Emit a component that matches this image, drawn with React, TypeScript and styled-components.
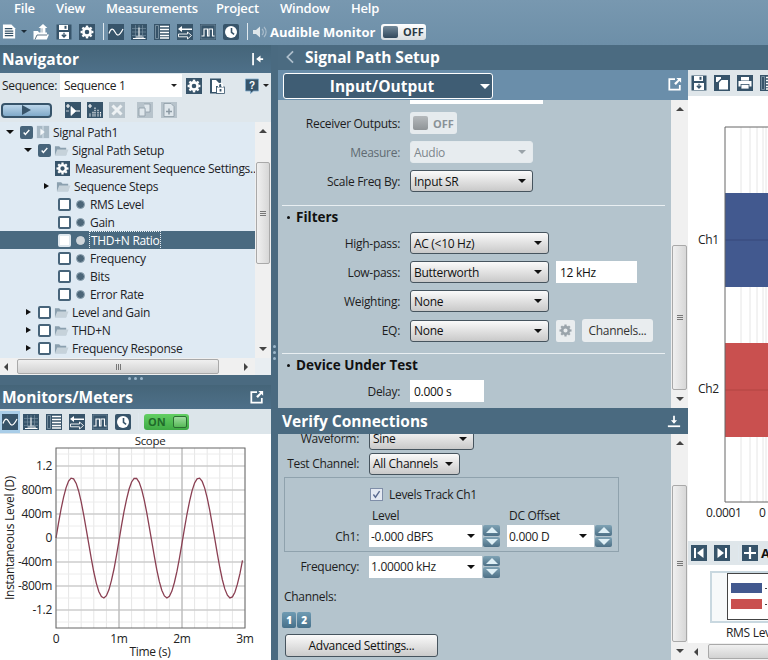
import React from "react";
import styled, { createGlobalStyle } from "styled-components";

const D = "#37546a";
const W = "#ffffff";

const Global = createGlobalStyle`
  html, body { margin: 0; padding: 0; width: 768px; height: 660px; overflow: hidden; background: #4a6a80; }
  * { box-sizing: border-box; }
  body { font-family: "Open Sans", "Noto Sans", "Liberation Sans", sans-serif; font-size: 12px; letter-spacing: -0.3px; color: #1d1d1d; }
`;

const Page = styled.div`width: 768px; height: 660px; display: flex; flex-direction: column; overflow: hidden; background: #4a6a80;`;
const TopBar = styled.header`height: 45px; flex: none; background: linear-gradient(#7898b0, #6d8fa8); color: #fff;`;
const MenuBar = styled.nav`height: 16px; display: flex; align-items: center; font-size: 13px; font-weight: 600; letter-spacing: -0.2px; padding-left: 14px; overflow: hidden;`;
const MenuItem = styled.span<{ $w: number }>`width: ${(p) => p.$w}px; flex: none; line-height: 16px; color: #fff;`;
const ToolBar = styled.div`height: 29px; display: flex; align-items: center; padding: 2px 0 0 2px;`;
const Tools = styled.div<{ $gap?: number; $ml?: number }>`display: flex; align-items: center; gap: ${(p) => p.$gap ?? 7}px; margin-left: ${(p) => p.$ml ?? 0}px;`;
const Sep = styled.i<{ $ml: number; $mr: number; $h?: number }>`display: block; width: 1px; height: ${(p) => p.$h ?? 17}px; background: #dfe8ee; margin: 0 ${(p) => p.$mr}px 0 ${(p) => p.$ml}px; flex: none;`;
const AudibleLabel = styled.span`font-size: 13px; font-weight: 700; letter-spacing: 0; margin-left: 2px; width: 111px; white-space: nowrap;`;

const Workspace = styled.div`flex: 1; display: flex; min-height: 0;`;
const LeftColumn = styled.aside`width: 271px; flex: none; display: flex; flex-direction: column; background: #4a6a80;`;
const VSplitter = styled.div`width: 7px; flex: none; display: flex; flex-direction: column; align-items: center; gap: 3px; padding-top: 300px;`;
const SplitDot = styled.i`display: block; width: 3px; height: 3px; border-radius: 50%; background: #9db8cb;`;
const HSplitter = styled.div`height: 10px; flex: none; display: flex; justify-content: center; align-items: center; gap: 3px; padding-bottom: 4px;`;
const PaneTitle = styled.div<{ $h: number }>`height: ${(p) => p.$h}px; flex: none; display: flex; align-items: center; justify-content: space-between; padding: 0 7px 0 2px; color: #fff; font-size: 15.5px; letter-spacing: 0; font-weight: 700; background: linear-gradient(#456579, #4e7089);`;

const SequenceRow = styled.div`height: 25px; flex: none; background: #dfe7ec; display: flex; align-items: center; padding-left: 2px;`;
const SeqLabel = styled.span`width: 58px; flex: none;`;
const SeqSelect = styled.div`width: 122px; height: 23px; flex: none; background: #fff; display: flex; align-items: center; justify-content: space-between; padding: 0 5px 0 4px; font-size: 12px;`;
const Caret = styled.i<{ $c?: string; $s?: number }>`display: block; flex: none; width: 0; height: 0; border-left: ${(p) => p.$s ?? 4}px solid transparent; border-right: ${(p) => p.$s ?? 4}px solid transparent; border-top: ${(p) => p.$s ?? 4}px solid ${(p) => p.$c ?? "#111"};`;
const ActionRow = styled.div`height: 24px; flex: none; background: #dfe7ec; display: flex; align-items: center; padding-left: 1px;`;
const RunButton = styled.div`width: 51px; height: 15px; flex: none; border: 2px solid #37546a; border-radius: 4px; background: linear-gradient(#bcd6ea, #7fa9c9); display: flex; align-items: center; justify-content: center;`;
const PlayMark = styled.i`display: block; width: 0; height: 0; border-top: 5px solid transparent; border-bottom: 5px solid transparent; border-left: 9px solid #37546a;`;

const TreeArea = styled.div`height: 236px; flex: none; display: flex; background: #dfeaf3;`;
const TreeList = styled.ul`flex: 1; margin: 0; padding: 1px 0 0; list-style: none; overflow: hidden; min-width: 0;`;
const TreeRow = styled.li<{ $indent: number; $selected?: boolean }>`height: 18px; display: flex; align-items: center; gap: 3px; padding-left: ${(p) => p.$indent}px; font-size: 12px; white-space: nowrap; background: ${(p) => (p.$selected ? "#4a6a80" : "transparent")}; color: ${(p) => (p.$selected ? "#fff" : "#1d2226")};`;
const TreeToggle = styled.i<{ $open?: boolean }>`display: flex; width: 8px; height: 8px; flex: none; margin-right: 3px; align-items: center; justify-content: center;
  &::after { content: ""; border-style: solid; ${(p) => p.$open ? "border-width: 4px 4px 0 4px; border-color: #111 transparent transparent transparent;" : "border-width: 3px 0 3px 5px; border-color: transparent transparent transparent #111;"} }`;
const Check = styled.i<{ $on?: boolean; $plain?: boolean }>`display: flex; align-items: center; justify-content: center; width: 13px; height: 13px; flex: none; border: 2px solid ${(p) => (p.$plain ? "#dfe8ee" : "#47647a")}; border-radius: 2px; background: ${(p) => (p.$on ? "#47647a" : "#fff")};`;
const Dot = styled.i<{ $light?: boolean }>`display: block; width: 9px; height: 9px; flex: none; border-radius: 50%; margin: 0 2px 0 2px; background: ${(p) => (p.$light ? "#cfd6db" : "#4c6678")}; border: 1px solid ${(p) => (p.$light ? "#cfd6db" : "#8ea3b1")};`;
const FocusText = styled.span`outline: 1px dotted #e6edf2; outline-offset: 0; padding: 0 1px;`;
const GearGap = styled.span`margin-left: 2px;`;

const VScroll = styled.div<{ $w: number }>`width: ${(p) => p.$w}px; flex: none; display: flex; flex-direction: column; align-items: center; background: #f0f0f0; overflow: hidden;`;
const ScrollUp = styled.i`display: block; flex: none; margin-top: 7px; width: 0; height: 0; border-left: 4px solid transparent; border-right: 4px solid transparent; border-bottom: 4px solid #444;`;
const ScrollDown = styled.i`display: block; flex: none; margin-top: auto; margin-bottom: 7px; width: 0; height: 0; border-left: 4px solid transparent; border-right: 4px solid transparent; border-top: 4px solid #444;`;
const VThumb = styled.div<{ $top: number; $h: number }>`width: calc(100% - 2px); height: ${(p) => p.$h}px; margin-top: ${(p) => p.$top}px; flex: none; background: linear-gradient(90deg, #f0f0f0, #d7d7d7); border: 1px solid #a9a9a9; border-radius: 2px; display: flex; align-items: center; justify-content: center;`;
const GripV = styled.i`display: block; width: 6px; height: 5px; border-top: 1px solid #777; border-bottom: 1px solid #777; background: linear-gradient(#777, #777) center / 100% 1px no-repeat;`;
const HScrollRow = styled.div`height: 17px; flex: none; display: flex; align-items: center; background: #f0f0f0;`;
const HThumb = styled.div<{ $ml: number; $w: number }>`height: 15px; width: ${(p) => p.$w}px; margin-left: ${(p) => p.$ml}px; flex: none; background: linear-gradient(#f0f0f0, #d2d2d2); border: 1px solid #a9a9a9; border-radius: 2px; display: flex; align-items: center; justify-content: center;`;
const GripH = styled.i`display: block; width: 5px; height: 6px; border-left: 1px solid #777; border-right: 1px solid #777; background: linear-gradient(#777, #777) center / 1px 100% no-repeat;`;
const ArrowL = styled.i<{ $ml: number }>`display: block; flex: none; margin-left: ${(p) => p.$ml}px; width: 0; height: 0; border-top: 4px solid transparent; border-bottom: 4px solid transparent; border-right: 4px solid #444;`;
const ArrowR = styled.i<{ $ml: number }>`display: block; flex: none; margin-left: ${(p) => p.$ml}px; width: 0; height: 0; border-top: 4px solid transparent; border-bottom: 4px solid transparent; border-left: 4px solid #444;`;
const ScrollCorner = styled.div`width: 16px; height: 17px; margin-left: auto; background: #e9eef2; flex: none;`;

const MonitorBar = styled.div`height: 25px; flex: none; background: #dce5ea; display: flex; align-items: center; padding-left: 2px;`;
const SelectedTile = styled.span`display: flex; padding: 3px 2px; margin: 0 3px 0 -2px; background: #a9cde8; flex: none;`;
const ScopeCard = styled.div`flex: 1; background: #fff; min-height: 0; svg { display: block; }`;

const MainColumn = styled.main`flex: 1; min-width: 0; display: flex; flex-direction: column;`;
const MainTitle = styled.div`height: 25px; flex: none; display: flex; align-items: center; padding: 0 0 2px 5px; gap: 8px; color: #fff; font-size: 15.5px; letter-spacing: 0; font-weight: 700; background: #4b6b81;`;
const MainBody = styled.div`flex: 1; display: flex; min-height: 0;`;
const CenterColumn = styled.section`width: 410px; flex: none; display: flex; flex-direction: column;`;
const SelectorBand = styled.div`height: 30px; flex: none; background: #6a8eaa; display: flex; align-items: flex-start; justify-content: space-between; padding: 3px 6px 0 5px;`;
const PageSelect = styled.div`width: 210px; height: 26px; border: 1px solid #fff; border-radius: 3px; background: #3f5d74; color: #fff; font-size: 15.5px; letter-spacing: 0; font-weight: 700; display: flex; align-items: center; padding: 0 2px 0 0;`;
const PageSelectText = styled.span`flex: 1; text-align: center;`;
const PopIcon = styled.span`margin-top: 4px; display: flex;`;

const PanelWrap = styled.div<{ $h: number }>`height: ${(p) => p.$h}px; flex: none; display: flex; background: #b4c4cd; overflow: hidden;`;
const PanelBody = styled.div`flex: 1; min-width: 0; overflow: hidden;`;
const TopContent = styled.div`margin-top: -18px;`;
const FormRow = styled.div<{ $mb?: number }>`display: grid; grid-template-columns: 122px auto 1fr; column-gap: 10px; align-items: center; height: 22px; margin-bottom: ${(p) => p.$mb ?? 7}px;`;
const FieldLabel = styled.label<{ $dim?: boolean }>`text-align: right; font-size: 12px; color: ${(p) => (p.$dim ? "#5f6b72" : "#1d1d1d")}; white-space: nowrap;`;
const FieldGroup = styled.div`display: flex; align-items: center; gap: 7px;`;
const SelectBox = styled.div<{ $w: number; $disabled?: boolean }>`width: ${(p) => p.$w}px; height: 22px; flex: none; display: flex; align-items: center; justify-content: space-between; padding: 0 6px 0 3px; font-size: 12px; border-radius: 3px; border: 1px solid ${(p) => (p.$disabled ? "#e4eaed" : "#46545e")}; background: ${(p) => (p.$disabled ? "#e7ecef" : "linear-gradient(#fafafa, #c9c9c9)")}; color: ${(p) => (p.$disabled ? "#7d868c" : "#111")};`;
const TextField = styled.div<{ $w: number }>`width: ${(p) => p.$w}px; height: 22px; flex: none; background: #fff; display: flex; align-items: center; padding: 0 4px; font-size: 12px; color: #111;`;
const Divider = styled.hr<{ $mt: number }>`border: 0; height: 1px; background: #e9eff2; margin: ${(p) => p.$mt}px 6px 0 4px;`;
const SectionTitle = styled.h3<{ $mb: number }>`margin: 2px 0 ${(p) => p.$mb}px; height: 18px; padding-left: 9px; display: flex; align-items: center; gap: 6px; font-size: 13.5px; letter-spacing: 0; font-weight: 700; color: #111; &::before { content: ""; width: 3px; height: 3px; background: #111; border-radius: 50%; }`;
const Toggle = styled.div<{ $variant: "off" | "dim" | "on" }>`display: flex; align-items: center; flex: none; border-radius: 3px; font-weight: 700; font-size: 11px; letter-spacing: 0;
  width: ${(p) => (p.$variant === "dim" ? 47 : 45)}px; height: ${(p) => (p.$variant === "dim" ? 22 : 16)}px; padding: ${(p) => (p.$variant === "dim" ? "4px 3px" : "2px")};
  gap: 3px; flex-direction: ${(p) => (p.$variant === "on" ? "row-reverse" : "row")};
  color: ${(p) => (p.$variant === "on" ? "#1f6a2a" : p.$variant === "dim" ? "#8a9298" : "#2a3a46")};
  background: ${(p) => (p.$variant === "on" ? "linear-gradient(#63cf63, #3faa45)" : p.$variant === "dim" ? "#e6ebee" : "linear-gradient(#fff, #d8dde0)")};
  justify-content: ${(p) => (p.$variant === "on" ? "space-between" : "flex-start")};`;
const Knob = styled.i<{ $variant: "off" | "dim" | "on" }>`display: block; flex: none; height: 100%; border-radius: 2px; width: ${(p) => (p.$variant === "on" ? 14 : 15)}px; background: ${(p) => (p.$variant === "on" ? "linear-gradient(#9fdc9f, #57ba57)" : p.$variant === "dim" ? "linear-gradient(#b5b9bc, #8f9497)" : "linear-gradient(#73899a, #32495c)")}; ${(p) => (p.$variant === "on" ? "border: 1px solid #2b6f32;" : "")}`;
const ToggleText = styled.span`line-height: 1; padding-left: 2px;`;
const FlatButton = styled.div`height: 23px; width: 71px; display: flex; align-items: center; justify-content: center; border-radius: 3px; background: #e9edef; color: #333; font-size: 12px;`;
const IconTile = styled.span`display: flex; align-items: center; justify-content: center; width: 19px; height: 22px; background: #e9edef; border-radius: 2px; flex: none;`;

const SectionBar = styled.div`height: 26px; flex: none; display: flex; align-items: center; justify-content: space-between; padding: 0 7px 0 4px; color: #fff; font-size: 15.5px; letter-spacing: 0; font-weight: 700; background: #4a6a80;`;
const BottomContent = styled.div`margin-top: -7px;`;
const BottomRow = styled.div<{ $mb?: number; $mt?: number }>`display: grid; grid-template-columns: 81px auto 1fr; column-gap: 10px; align-items: center; height: 23px; margin-bottom: ${(p) => p.$mb ?? 0}px; margin-top: ${(p) => p.$mt ?? 0}px;`;
const GroupBox = styled.div`margin: 2px 0 0 6px; width: 335px; height: 75px; border: 1px solid #8fa2ad; padding-top: 8px;`;
const CheckRow = styled.div`margin-left: 85px; display: flex; align-items: center; gap: 6px; height: 16px; font-size: 12px;`;
const LightCheck = styled.i`display: flex; align-items: center; justify-content: center; width: 13px; height: 13px; background: #e4e9f2; border: 1px solid #7f8ea8;`;
const HeadRow = styled.div`margin: 5px 0 3px 87px; height: 15px; display: grid; grid-template-columns: 137px auto; font-size: 12px; align-items: center;`;
const GroupFieldRow = styled.div`display: grid; grid-template-columns: 74px auto; column-gap: 10px; align-items: center; height: 22px;`;
const Combo = styled.div<{ $w: number }>`width: ${(p) => p.$w}px; height: 22px; flex: none; background: #fff; display: flex; align-items: center; justify-content: space-between; padding: 0 7px 0 2px; font-size: 12px;`;
const ComboSet = styled.div`display: flex; align-items: center; gap: 1px;`;
const ComboGap = styled.div`width: 5px;`;
const Spin = styled.div`display: flex; flex-direction: column; gap: 1px; width: 17px; height: 22px; flex: none;`;
const SpinPart = styled.div<{ $down?: boolean }>`flex: 1; border-radius: 2px; background: linear-gradient(#7fa3b5, #4d7086); display: flex; align-items: center; justify-content: center;
  &::after { content: ""; border-left: 6px solid transparent; border-right: 6px solid transparent; ${(p) => p.$down ? "border-top: 6px solid #dff0f6;" : "border-bottom: 6px solid #dff0f6;"} }`;
const ChannelsLabel = styled.div`margin: 9px 0 0 6px; height: 18px; font-size: 12px; display: flex; align-items: center;`;
const ChannelChips = styled.div`display: flex; gap: 1px; margin: 7px 0 0 4px; height: 16px;`;
const Chip = styled.span`width: 14px; height: 16px; border-radius: 2px; background: linear-gradient(#6f9bb3, #46708a); color: #fff; font-size: 10px; font-weight: 800; display: flex; align-items: center; justify-content: center;`;
const AdvancedButton = styled.div`margin: 6px 0 0 7px; width: 153px; height: 23px; border: 1px solid #46545e; border-radius: 3px; background: linear-gradient(#fafafa, #cbcbcb); display: flex; align-items: center; justify-content: center; font-size: 12px; color: #111;`;

const ResultsColumn = styled.section`flex: 1; min-width: 0; display: flex; flex-direction: column; background: #fff; overflow: hidden;`;
const ResultsBar = styled.div<{ $h: number }>`height: ${(p) => p.$h}px; flex: none; background: #dfe6ea; display: flex; align-items: center; padding-left: 3px; overflow: hidden; white-space: nowrap;`;
const ChartHolder = styled.div`height: 445px; flex: none; svg { display: block; }`;
const ThumbStrip = styled.div`flex: 1; min-height: 0; padding: 6px 0 0 22px; overflow: hidden;`;
const ThumbFigure = styled.figure`margin: 0; width: 86px; text-align: center; font-size: 12px; color: #222;`;
const ThumbFrame = styled.div`height: 52px; width: 92px; border: 2px solid #c9d8e0; background: #f7f9fa; padding: 0 0 0 15px; margin-bottom: 1px; svg { display: block; }`;
const AddLabel = styled.span`font-size: 13px; font-weight: 700; letter-spacing: 0; margin-left: 3px; color: #111;`;

const Ico = styled.svg.attrs({ viewBox: "0 0 16 16", xmlns: "http://www.w3.org/2000/svg" })<{ $s?: number }>`
  width: ${(p) => p.$s ?? 16}px; height: ${(p) => p.$s ?? 16}px; flex: none; display: block;
`;

const gearTeeth = (c: string, cx = 8, cy = 8) =>
  [0, 45, 90, 135, 180, 225, 270, 315].map((a) => (
    <line key={a} x1={cx} y1={cy - 4.5} x2={cx} y2={cy - 6.4} stroke={c} strokeWidth="2.4" transform={`rotate(${a} ${cx} ${cy})`} />
  ));

type G = "scope" | "fft" | "list" | "swap" | "pulse" | "clock" | "gear" | "doc" | "open" | "save" | "lock" | "help" | "addStep" | "addBars" | "x" | "dup" | "addDoc" | "speaker" | "collapse" | "pop" | "dock" | "folder" | "path" | "copy" | "print" | "prev" | "next" | "plus" | "chk" | "chkLight" | "gearGrey" | "back";

const glyph: Record<G, React.ReactNode> = {
  scope: <><rect width="16" height="16" fill={D} /><path d="M1 9.5C3 4 5 4 7 8s4 5 8-3" stroke={W} strokeWidth="1.2" fill="none" /></>,
  fft: <><rect width="16" height="16" fill={D} /><path d="M4.5 1v13M8 1v13M11.5 1v13M1 4.5h14M1 8h14M1 11.5h14" stroke="#7d95a6" strokeWidth=".6" /><path d="M2 14.5h12.5M6 14.5V12M8 14.5V3.5M10 14.5v-3M12 14.5v-2" stroke={W} strokeWidth="1" /></>,
  list: <><rect width="16" height="16" fill={D} /><path d="M1.5 1.5h3v13h-3z" fill="none" stroke="#8ea3b1" strokeWidth=".7" /><path d="M6 2.5h9M6 5.5h9M6 8.5h9M6 11.5h9M6 14h9" stroke={W} strokeWidth="1.5" /></>,
  swap: <><rect width="16" height="16" fill={D} /><path d="M15 4.5H5V2L1 5l4 3V6h10z" fill={W} /><path d="M1.5 10h9V8l4 3.5-4 3.5v-2.2h-9z" fill={D} stroke={W} strokeWidth=".9" /></>,
  pulse: <><rect width="16" height="16" fill={D} /><rect x="1" y="1" width="14" height="14" fill="none" stroke="#7d95a6" strokeWidth=".6" /><path d="M1.5 12h2.5V5h3.5v7h1.5V5h3.5v7h2" fill="none" stroke={W} strokeWidth="1.1" /></>,
  clock: <><rect width="16" height="16" rx="2" fill={D} /><circle cx="8" cy="8" r="6" fill={W} /><path d="M8.5 4v4.3l2.6 2" stroke={D} strokeWidth="1.6" fill="none" /></>,
  gear: <><rect width="16" height="16" fill={D} /><circle cx="8" cy="8" r="3.6" fill="none" stroke={W} strokeWidth="2.6" />{gearTeeth(W)}</>,
  gearGrey: <><circle cx="8" cy="8" r="3.6" fill="none" stroke="#9aa4ab" strokeWidth="2.8" />{gearTeeth("#9aa4ab")}</>,
  doc: <><path d="M1 .5h9l4 4v11H1z" fill={W} /><path d="M3 5h8M3 7.5h9M3 10h9M3 12.5h9" stroke={D} strokeWidth="1.3" /></>,
  open: <><path d="M.5 15.5V7h4.5l1 1.5h1.6V4H5.6L10 0l4.4 4h-2V8.5h1.6v2h2l-2.2 5z" fill={W} /><path d="M2 15.5 4 11h10" fill="none" stroke={D} strokeWidth=".8" /><path d="M9 4.3V8.5" stroke={D} strokeWidth=".5" /></>,
  save: <><rect width="15" height="15" y=".5" x=".5" fill={D} /><rect x="3" y="1" width="9" height="5" fill={W} /><rect x="8.5" y="1.8" width="2" height="3" fill={D} /><rect x="3" y="8" width="10" height="7" fill={W} /><path d="M8 8.8v3.4M5.8 10.8 8 13l2.2-2.2" stroke={D} strokeWidth="1.3" fill="none" /></>,
  lock: <><rect x="1" y=".5" width="11" height="15" fill={D} /><path d="M3 2h4l3 3v3H7v6H3z" fill={W} /><rect x="7.5" y="9" width="8" height="6.5" fill={W} stroke={D} strokeWidth=".8" /><path d="M9.5 9V7.3a2 2 0 0 1 4 0V9" fill="none" stroke={W} strokeWidth="1.3" /><rect x="10.6" y="11" width="1.8" height="2.5" fill={D} /></>,
  help: <><path d="M1.5 1h13v12H9.5l-3 2.5V13h-5z" fill={D} stroke="#7fa9c9" strokeWidth=".8" /><text x="8" y="11" textAnchor="middle" fontSize="10" fontWeight="700" fill="#fff" fontFamily="Liberation Sans, sans-serif">?</text></>,
  addStep: <><rect width="16" height="16" fill={D} /><path d="M1 4h4M3 2v4" stroke={W} strokeWidth="1.2" /><path d="M1 9h3M6 4.5v9l5-4.5z" stroke={W} fill={W} strokeWidth=".7" /><path d="M11 9h4" stroke={W} strokeWidth="1" /></>,
  addBars: <><rect width="16" height="16" fill={D} /><path d="M1 4h4M3 2v4" stroke={W} strokeWidth="1.2" /><path d="M3 14.5v-3M6 14.5V9M8 14.5V5M11 14.5V7M13.5 14.5V10" stroke={W} strokeWidth="1.1" strokeDasharray="1.2 .6" /></>,
  x: <><rect width="16" height="16" fill="#b7c3cb" /><path d="M3.5 3.5l9 9M12.5 3.5l-9 9" stroke="#eef2f4" strokeWidth="3" /></>,
  dup: <><rect width="16" height="16" fill="#b7c3cb" /><path d="M2 6h6v8H2zM7 2h6v8H9" fill="#dfe7ec" stroke="#8c9aa4" strokeWidth=".8" /></>,
  addDoc: <><rect width="16" height="16" fill="#b7c3cb" /><path d="M3 1.5h7l3 3v10H3z" fill="#dfe7ec" stroke="#8c9aa4" strokeWidth=".8" /><path d="M8 6.5v6M5 9.5h6" stroke="#8c9aa4" strokeWidth="1.5" /></>,
  speaker: <><path d="M1 6h3l4-3.5v11L4 10H1z" fill="#dfe6ea" /><path d="M10 5a4 4 0 0 1 0 6M12 3a7 7 0 0 1 0 10" fill="none" stroke="#a9bccb" strokeWidth="1.2" /></>,
  collapse: <><path d="M3.5 1v14" stroke={W} strokeWidth="2" /><path d="M7 8l5-4v3h3v2h-3v3z" fill={W} /></>,
  pop: <><path d="M8 2.5H1.5v12h12V9" fill="none" stroke={W} strokeWidth="2" /><path d="M9.5 1h5.5v5.5l-2-2-4 4.5-2-2 4.5-4z" fill={W} /></>,
  dock: <><path d="M1 14h14" stroke={W} strokeWidth="2" /><path d="M8 11L4.5 7H7V2h2v5h2.5z" fill={W} /></>,
  folder: <><path d="M1 13V3.5h4.5L7 5h6v8z" fill="#8ba0af" /><path d="M1 13l2.4-6H15.5L13 13z" fill="#c6d2da" /></>,
  path: <><rect x="1" y="1" width="14" height="14" fill="#a8b9c5" /><path d="M8 1v14" stroke="#dfeaf3" strokeWidth="1" /><path d="M5 4v8l5-4z" fill="#f2f6f9" /></>,
  copy: <><rect width="16" height="16" fill={D} /><path d="M7.5 5h6.5v9.5H5V7.5z" fill={W} /><path d="M2 2h5v1.5L3.5 7H2z" fill={W} /></>,
  print: <><rect width="16" height="16" fill={D} /><rect x="4" y="2" width="8" height="3.5" fill={W} /><rect x="1.5" y="6" width="13" height="5.5" fill={W} /><rect x="4" y="9.5" width="8" height="4.5" fill={W} stroke={D} strokeWidth=".8" /></>,
  prev: <><rect width="16" height="16" fill={D} /><rect x="3" y="3" width="2" height="10" fill={W} /><path d="M12.5 3v10L6 8z" fill={W} /></>,
  next: <><rect width="16" height="16" fill={D} /><rect x="11" y="3" width="2" height="10" fill={W} /><path d="M3.5 3v10L10 8z" fill={W} /></>,
  plus: <><rect width="16" height="16" fill={D} /><path d="M8 2v12M2 8h12" stroke={W} strokeWidth="2.2" /></>,
  chk: <path d="M3 8l3 3.5L13 3.5" fill="none" stroke={W} strokeWidth="2.4" />,
  chkLight: <path d="M3.5 8l3 4L12.5 3" fill="none" stroke="#5a6a90" strokeWidth="2" />,
  back: <path d="M11.5 1.5L5 8l6.5 6.5" fill="none" stroke="#aebfcc" strokeWidth="2" />,
};

const Icon = ({ n, s }: { n: G; s?: number }) => <Ico $s={s}>{glyph[n]}</Ico>;

const SCOPE_W = 271;
const SCOPE_H = 226;
const PL = 56, PR = 245, PT = 14, PB = 194;
const msToX = (m: number) => PL + (m / 3) * (PR - PL);
const vToY = (v: number) => (PT + PB) / 2 - (v / 1.5) * ((PB - PT) / 2);

const wave = () => {
  const pts: string[] = [];
  for (let t = 0; t <= 3; t += 0.04) {
    pts.push(`${msToX(t).toFixed(1)},${vToY(Math.sin((2 * Math.PI * t) / 1.007)).toFixed(1)}`);
  }
  return pts.join(" ");
};

const ScopeChart = () => {
  const minorX = Array.from({ length: 16 }, (_, i) => i * 0.2);
  const minorY = Array.from({ length: 15 }, (_, i) => -1.4 + i * 0.2);
  const majorY: [number, string][] = [[1.2, "1.2"], [0.8, "800m"], [0.4, "400m"], [0, "0"], [-0.4, "-400m"], [-0.8, "-800m"], [-1.2, "-1.2"]];
  return (
    <svg width={SCOPE_W} height={SCOPE_H} fontFamily={'"Open Sans", sans-serif'} fontSize="12" fill="#222">
      {minorX.map((m) => <line key={m} x1={msToX(m)} x2={msToX(m)} y1={PT} y2={PB} stroke="#e6e6e6" />)}
      {minorY.map((v) => <line key={v} y1={vToY(v)} y2={vToY(v)} x1={PL} x2={PR} stroke="#ececec" />)}
      {[1, 2].map((m) => <line key={m} x1={msToX(m)} x2={msToX(m)} y1={PT} y2={PB} stroke="#aaa" />)}
      {majorY.map(([v]) => <line key={v} y1={vToY(v)} y2={vToY(v)} x1={PL} x2={PR} stroke="#bdbdbd" />)}
      <polyline points={wave()} fill="none" stroke="#8a3f52" strokeWidth="1.3" />
      <rect x={PL} y={PT} width={PR - PL} height={PB - PT} fill="none" stroke="#666" />
      <text x="150" y="11" textAnchor="middle" fontSize="11.5">Scope</text>
      {majorY.map(([v, l]) => <text key={l} x="52" y={vToY(v) + 4} textAnchor="end">{l}</text>)}
      {[0, 1, 2, 3].map((m) => <text key={m} x={msToX(m)} y="209" textAnchor="middle">{m === 0 ? "0" : `${m}m`}</text>)}
      <text x="150" y="222" textAnchor="middle">Time (s)</text>
      <text transform={`translate(14 104) rotate(-90)`} textAnchor="middle">Instantaneous Level (D)</text>
    </svg>
  );
};

const LevelChart = () => (
  <svg width="80" height="445" fontFamily={'"Open Sans", sans-serif'} fontSize="12" fill="#222">
    {[53, 62, 69, 75, 78].map((x) => <line key={x} x1={x} x2={x} y1="31" y2="406" stroke="#e6e6e6" />)}
    <rect x="37" y="97" width="43" height="94" fill="#42598f" />
    <line x1="37" x2="80" y1="144" y2="144" stroke="#36497a" />
    <rect x="37" y="247" width="43" height="94" fill="#c9504f" />
    <line x1="37" x2="80" y1="294" y2="294" stroke="#b24443" />
    <path d="M80 31H37V406H80" fill="none" stroke="#666" />
    <text x="10" y="148">Ch1</text>
    <text x="10" y="297">Ch2</text>
    <text x="18" y="421">0.0001</text>
    <text x="71" y="421">0</text>
  </svg>
);

const MiniChart = () => (
  <svg width="60" height="47">
    <rect x=".5" y=".5" width="59" height="46" fill="#fff" stroke="#444" />
    <rect x="4" y="10" width="31" height="10" fill="#42598f" />
    <rect x="4" y="26" width="31" height="10" fill="#c9504f" />
    <rect x="38" y="15" width="2" height="1" fill="#444" />
    <rect x="38" y="31" width="2" height="1" fill="#444" />
  </svg>
);

const Pad = styled.span<{ $w: number }>`display: block; width: ${(p) => p.$w}px; flex: none;`;

const monitorIcons: G[] = ["fft", "list", "swap", "pulse", "clock"];

export default function App() {
  return (
    <Page>
      <Global />
      <TopBar>
        <MenuBar>
          <MenuItem $w={42}>File</MenuItem>
          <MenuItem $w={50}>View</MenuItem>
          <MenuItem $w={110}>Measurements</MenuItem>
          <MenuItem $w={64}>Project</MenuItem>
          <MenuItem $w={71}>Window</MenuItem>
          <MenuItem $w={40}>Help</MenuItem>
        </MenuBar>
        <ToolBar>
          <Icon n="doc" s={15} />
          <Pad $w={4} />
          <Caret $c="#1d2c38" $s={3} />
          <Pad $w={6} />
          <Tools>
            <Icon n="open" />
            <Icon n="save" />
            <Icon n="gear" />
          </Tools>
          <Sep $ml={8} $mr={4} />
          <Tools>
            <Icon n="scope" />
            <Icon n="fft" />
            <Icon n="list" />
            <Icon n="swap" />
            <Icon n="pulse" />
            <Icon n="clock" />
          </Tools>
          <Sep $ml={8} $mr={4} />
          <Icon n="speaker" />
          <AudibleLabel>Audible Monitor</AudibleLabel>
          <Toggle $variant="off"><Knob $variant="off" /><ToggleText>OFF</ToggleText></Toggle>
        </ToolBar>
      </TopBar>
      <Workspace>
        <LeftColumn>
          <PaneTitle $h={28}>Navigator <Icon n="collapse" s={14} /></PaneTitle>
          <SequenceRow>
            <SeqLabel>Sequence:</SeqLabel>
            <SeqSelect>Sequence 1<Caret $c="#222" $s={3} /></SeqSelect>
            <Pad $w={4} />
            <Icon n="gear" />
            <Pad $w={7} />
            <Icon n="lock" />
            <Pad $w={19} />
            <Icon n="help" />
            <Pad $w={3} />
            <Caret $c="#222" $s={3} />
          </SequenceRow>
          <ActionRow>
            <RunButton><PlayMark /></RunButton>
            <Sep $ml={6} $mr={6} />
            <Tools $gap={6}>
              <Icon n="addStep" />
              <Icon n="addBars" />
              <Icon n="x" />
            </Tools>
            <Sep $ml={8} $mr={3} />
            <Tools $gap={8}>
              <Icon n="dup" />
              <Icon n="addDoc" />
            </Tools>
          </ActionRow>
          <TreeArea>
            <TreeList>
              <TreeRow $indent={6}><TreeToggle $open /><Check $on><Icon n="chk" s={9} /></Check><Icon n="path" s={14} />Signal Path1</TreeRow>
              <TreeRow $indent={24}><TreeToggle $open /><Check $on><Icon n="chk" s={9} /></Check><Icon n="folder" s={15} />Signal Path Setup</TreeRow>
              <TreeRow $indent={55}><Icon n="gear" s={15} /><GearGap>Measurement Sequence Settings..</GearGap></TreeRow>
              <TreeRow $indent={42}><TreeToggle /><Icon n="folder" s={15} />Sequence Steps</TreeRow>
              <TreeRow $indent={58}><Check /><Dot />RMS Level</TreeRow>
              <TreeRow $indent={58}><Check /><Dot />Gain</TreeRow>
              <TreeRow $indent={58} $selected><Check $plain /><Dot $light /><FocusText>THD+N Ratio</FocusText></TreeRow>
              <TreeRow $indent={58}><Check /><Dot />Frequency</TreeRow>
              <TreeRow $indent={58}><Check /><Dot />Bits</TreeRow>
              <TreeRow $indent={58}><Check /><Dot />Error Rate</TreeRow>
              <TreeRow $indent={24}><TreeToggle /><Check /><Icon n="folder" s={15} />Level and Gain</TreeRow>
              <TreeRow $indent={24}><TreeToggle /><Check /><Icon n="folder" s={15} />THD+N</TreeRow>
              <TreeRow $indent={24}><TreeToggle /><Check /><Icon n="folder" s={15} />Frequency Response</TreeRow>
            </TreeList>
            <VScroll $w={16}>
              <ScrollUp />
              <VThumb $top={29} $h={102}><GripV /></VThumb>
              <ScrollDown />
            </VScroll>
          </TreeArea>
          <HScrollRow>
            <ArrowL $ml={4} />
            <HThumb $ml={9} $w={202}><GripH /></HThumb>
            <ArrowR $ml={25} />
            <ScrollCorner />
          </HScrollRow>
          <HSplitter><SplitDot /><SplitDot /><SplitDot /></HSplitter>
          <PaneTitle $h={24}>Monitors/Meters <Icon n="pop" s={14} /></PaneTitle>
          <MonitorBar>
            <SelectedTile><Icon n="scope" /></SelectedTile>
            <Tools>
              {monitorIcons.map((n) => <Icon key={n} n={n} />)}
            </Tools>
            <Sep $ml={7} $mr={5} />
            <Toggle $variant="on"><Knob $variant="on" /><ToggleText>ON</ToggleText></Toggle>
          </MonitorBar>
          <ScopeCard><ScopeChart /></ScopeCard>
        </LeftColumn>
        <VSplitter><SplitDot /><SplitDot /><SplitDot /></VSplitter>
        <MainColumn>
          <MainTitle><Icon n="back" s={14} />Signal Path Setup</MainTitle>
          <MainBody>
            <CenterColumn>
              <SelectorBand>
                <PageSelect><PageSelectText>Input/Output</PageSelectText><Caret $c="#fff" $s={5} /></PageSelect>
                <PopIcon><Icon n="pop" s={14} /></PopIcon>
              </SelectorBand>
              <PanelWrap $h={308}>
                <PanelBody>
                  <TopContent>
                    <FormRow $mb={8}><span /><TextField $w={133} /></FormRow>
                    <FormRow><FieldLabel>Receiver Outputs:</FieldLabel><Toggle $variant="dim"><Knob $variant="dim" /><ToggleText>OFF</ToggleText></Toggle></FormRow>
                    <FormRow><FieldLabel $dim>Measure:</FieldLabel><SelectBox $w={123} $disabled>Audio<Caret $c="#9aa3a9" /></SelectBox></FormRow>
                    <FormRow $mb={0}><FieldLabel>Scale Freq By:</FieldLabel><SelectBox $w={123}>Input SR<Caret /></SelectBox></FormRow>
                    <Divider $mt={13} />
                    <SectionTitle $mb={6}>Filters</SectionTitle>
                    <FormRow><FieldLabel>High-pass:</FieldLabel><SelectBox $w={139}>AC (&lt;10 Hz)<Caret /></SelectBox></FormRow>
                    <FormRow><FieldLabel>Low-pass:</FieldLabel><FieldGroup><SelectBox $w={139}>Butterworth<Caret /></SelectBox><TextField $w={81}>12 kHz</TextField></FieldGroup></FormRow>
                    <FormRow><FieldLabel>Weighting:</FieldLabel><SelectBox $w={139}>None<Caret /></SelectBox></FormRow>
                    <FormRow $mb={0}><FieldLabel>EQ:</FieldLabel><FieldGroup><SelectBox $w={139}>None<Caret /></SelectBox><IconTile><Icon n="gearGrey" s={15} /></IconTile><FlatButton>Channels...</FlatButton></FieldGroup></FormRow>
                    <Divider $mt={12} />
                    <SectionTitle $mb={6}>Device Under Test</SectionTitle>
                    <FormRow $mb={0}><FieldLabel>Delay:</FieldLabel><TextField $w={74}>0.000 s</TextField></FormRow>
                  </TopContent>
                </PanelBody>
                <VScroll $w={17}>
                  <ScrollUp />
                  <VThumb $top={134} $h={145}><GripV /></VThumb>
                  <ScrollDown />
                </VScroll>
              </PanelWrap>
              <SectionBar>Verify Connections <Icon n="dock" s={14} /></SectionBar>
              <PanelWrap $h={226}>
                <PanelBody>
                  <BottomContent>
                    <BottomRow $mb={2}><FieldLabel>Waveform:</FieldLabel><SelectBox $w={105}>Sine<Caret /></SelectBox></BottomRow>
                    <BottomRow><FieldLabel>Test Channel:</FieldLabel><SelectBox $w={91}>All Channels<Caret /></SelectBox></BottomRow>
                    <GroupBox>
                      <CheckRow><LightCheck><Icon n="chkLight" s={11} /></LightCheck>Levels Track Ch1</CheckRow>
                      <HeadRow><span>Level</span><span>DC Offset</span></HeadRow>
                      <GroupFieldRow>
                        <FieldLabel>Ch1:</FieldLabel>
                        <ComboSet>
                          <Combo $w={113}>-0.000 dBFS<Caret /></Combo>
                          <Spin><SpinPart /><SpinPart $down /></Spin>
                          <ComboGap />
                          <Combo $w={87}>0.000 D<Caret /></Combo>
                          <Spin><SpinPart /><SpinPart $down /></Spin>
                        </ComboSet>
                      </GroupFieldRow>
                    </GroupBox>
                    <BottomRow $mt={3}><FieldLabel>Frequency:</FieldLabel>
                      <ComboSet><Combo $w={113}>1.00000 kHz<Caret /></Combo><Spin><SpinPart /><SpinPart $down /></Spin></ComboSet>
                    </BottomRow>
                    <ChannelsLabel>Channels:</ChannelsLabel>
                    <ChannelChips><Chip>1</Chip><Chip>2</Chip></ChannelChips>
                    <AdvancedButton>Advanced Settings...</AdvancedButton>
                  </BottomContent>
                </PanelBody>
                <VScroll $w={17}>
                  <ScrollUp />
                  <VThumb $top={40} $h={157}><GripV /></VThumb>
                  <ScrollDown />
                </VScroll>
              </PanelWrap>
            </CenterColumn>
            <ResultsColumn>
              <ResultsBar $h={26}>
                <Tools><Icon n="save" /><Icon n="copy" /><Icon n="print" /><Icon n="list" /></Tools>
              </ResultsBar>
              <ChartHolder><LevelChart /></ChartHolder>
              <ResultsBar $h={24}>
                <Tools><Icon n="prev" /><Icon n="next" /></Tools>
                <Sep $ml={8} $mr={3} />
                <Icon n="plus" />
                <AddLabel>Add</AddLabel>
              </ResultsBar>
              <ThumbStrip>
                <ThumbFigure>
                  <ThumbFrame><MiniChart /></ThumbFrame>
                  RMS Level
                </ThumbFigure>
              </ThumbStrip>
              <HScrollRow>
                <ArrowL $ml={6} />
                <HThumb $ml={10} $w={70} />
              </HScrollRow>
            </ResultsColumn>
          </MainBody>
        </MainColumn>
      </Workspace>
    </Page>
  );
}
